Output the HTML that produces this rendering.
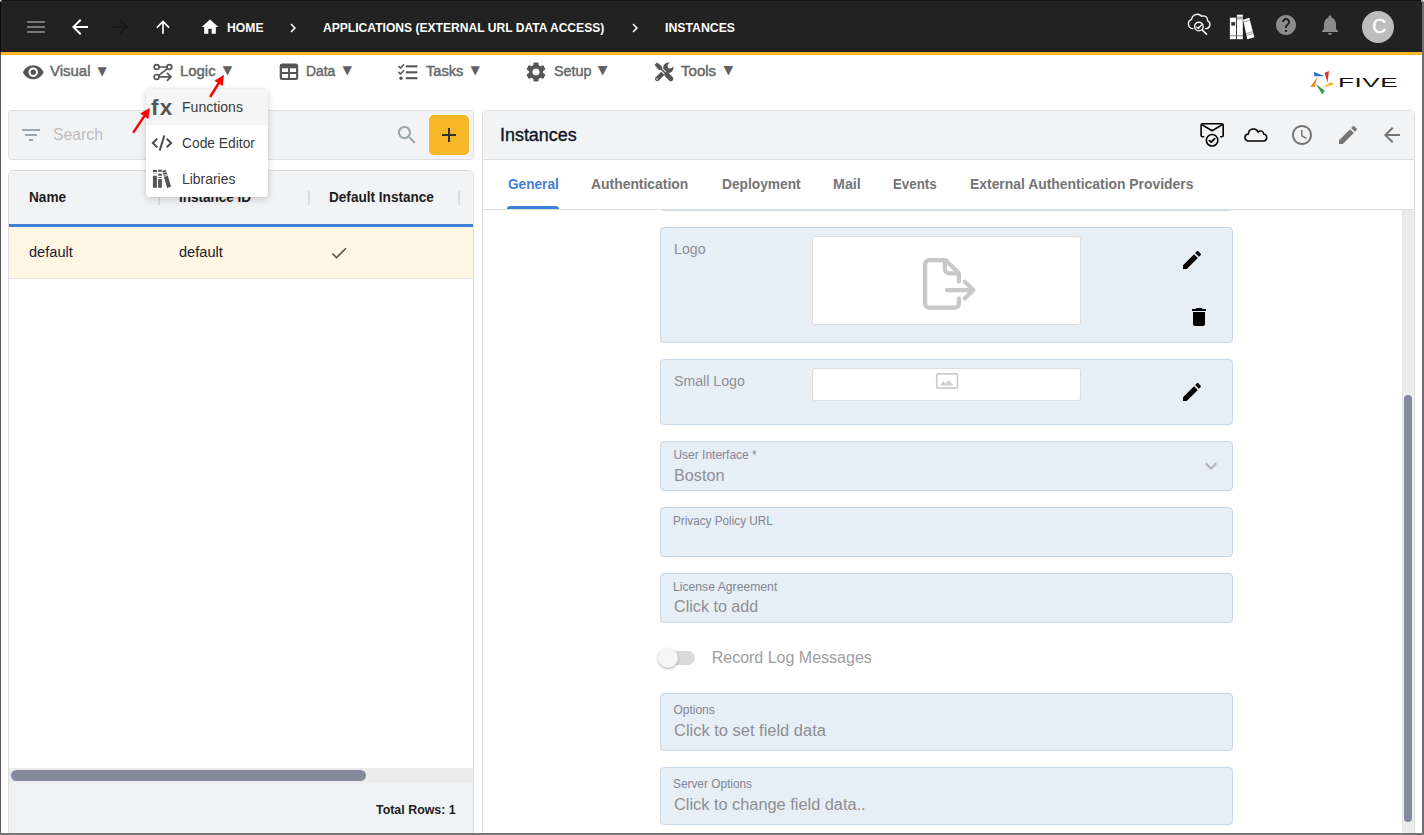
<!DOCTYPE html>
<html lang="en">
<head>
<meta charset="utf-8">
<title>Instances</title>
<style>
*{box-sizing:border-box;margin:0;padding:0}
html,body{width:1424px;height:835px;overflow:hidden;background:#fff}
body{font-family:"Liberation Sans",sans-serif;color:#222;position:relative}
.b{position:absolute}
.t{position:absolute;white-space:nowrap;line-height:1;transform-origin:0 0}
svg{position:absolute;overflow:visible}
#hdr{left:0;top:0;width:1424px;height:52px;background:#222}
#ybar{left:0;top:52px;width:1424px;height:3px;background:#f6b728}
.fld{position:absolute;left:660px;width:573px;background:#e6eef6;border:1px solid #c8d9ea;border-radius:4px}
.wb{position:absolute;left:812px;width:269px;background:#fff;border:1px solid #ddd;border-radius:3px}
.sep{position:absolute;top:191px;width:2px;height:14px;background:#dcdcdc}
</style>
</head>
<body>
<div class="b" id="hdr"></div>
<div class="b" id="ybar"></div>

<svg style="left:24px;top:15px" width="24" height="24" viewBox="0 0 24 24"><path fill="#777"  d="M3 18h18v-2H3v2zm0-5h18v-2H3v2zm0-7v2h18V6H3z"/></svg>
<svg style="left:68px;top:15px" width="24" height="24" viewBox="0 0 24 24"><path fill="#fff"  d="M20 11H7.830l5.590-5.590L12 4l-8 8 8 8 1.410-1.410L7.830 13H20v-2z"/></svg>
<svg style="left:108px;top:15px" width="24" height="24" viewBox="0 0 24 24"><path fill="#191919"  d="M12 4l-1.410 1.410L16.170 11H4v2h12.170l-5.580 5.590L12 20l8-8z"/></svg>
<svg style="left:153px;top:17.4px" width="20" height="20" viewBox="0 0 24 24"><path fill="#fff"  d="M4 12l1.410 1.410L11 7.830V20h2V7.830l5.580 5.590L20 12l-8-8-8 8z"/></svg>
<svg style="left:200px;top:17px" width="20" height="20" viewBox="0 0 24 24"><path fill="#fff"  d="M10 20v-6h4v6h5v-8h3L12 3 2 12h3v8z"/></svg>
<div class="t" style="left:226.50px;top:21.00px;font-size:13px;font-weight:700;color:#fff;transform:scaleX(0.9359);">HOME</div>
<svg style="left:284px;top:18.5px" width="18" height="18" viewBox="0 0 24 24"><path fill="#fff"  d="M10 6L8.590 7.410 13.170 12l-4.580 4.590L10 18l6-6z"/></svg>
<div class="t" style="left:323.10px;top:21.00px;font-size:13px;font-weight:700;color:#fff;transform:scaleX(0.9295);">APPLICATIONS (EXTERNAL URL DATA ACCESS)</div>
<svg style="left:626px;top:18.5px" width="18" height="18" viewBox="0 0 24 24"><path fill="#fff"  d="M10 6L8.590 7.410 13.170 12l-4.580 4.590L10 18l6-6z"/></svg>
<div class="t" style="left:665.10px;top:21.00px;font-size:13px;font-weight:700;color:#fff;transform:scaleX(0.9444);">INSTANCES</div>
<svg style="left:0;top:0" width="1" height="1"><g fill="none" stroke="#fff" stroke-width="1.35" stroke-linecap="round" stroke-linejoin="round"><path d="M1192.900 28.600A4.800 4.800 0 0 1 1191.600 19.300A5.700 5.700 0 0 1 1201.600 16.300A4.400 4.400 0 0 1 1207.700 20.900A4.100 4.100 0 0 1 1205.400 28.600"/><circle cx="1198.900" cy="26.500" r="4.300"/><path d="M1202.200 29.900L1206.500 34.200" stroke-width="1.600"/><path d="M1196.500 26.900L1198.300 28.500L1201.400 25" stroke-width="1.200"/></g><rect x="1229.900" y="17.700" width="6.100" height="21.500" fill="#fff"/><rect x="1231.300" y="22.100" width="3.800" height="3.500" fill="#333"/><rect x="1229.900" y="35.100" width="6.100" height="1.200" fill="#999"/><rect x="1236.900" y="14.700" width="5.900" height="24.500" fill="#fff"/><rect x="1236.900" y="16.500" width="5.900" height="3" fill="#aaa"/><rect x="1236.900" y="35.100" width="5.900" height="1.200" fill="#999"/><path d="M1243.100 19.700L1249.300 17.700L1254.300 37.200L1247.300 39.200z" fill="#fff"/><path d="M1243.700 22.200L1249.900 20.200M1246.300 35.400L1253.300 33.400M1245.900 33.600L1252.900 31.600" stroke="#999" stroke-width="0.900"/></svg>
<svg style="left:1274px;top:13px" width="24" height="24" viewBox="0 0 24 24"><path fill="#8c8c8c"  d="M12 2C6.480 2 2 6.480 2 12s4.480 10 10 10 10-4.480 10-10S17.520 2 12 2zm1 17h-2v-2h2v2zm2.070-7.750l-.9.920C13.450 12.900 13 13.500 13 15h-2v-.5c0-1.100.450-2.100 1.170-2.830l1.240-1.260c.370-.36.590-.86.590-1.410 0-1.100-.9-2-2-2s-2 .9-2 2H8c0-2.210 1.790-4 4-4s4 1.790 4 4c0 .880-.360 1.680-.930 2.250z"/></svg>
<svg style="left:1318px;top:13px" width="24" height="24" viewBox="0 0 24 24"><path fill="#8c8c8c"  d="M12 22c1.100 0 2-.9 2-2h-4c0 1.100.890 2 2 2zm6-6v-5c0-3.070-1.640-5.640-4.500-6.320V4c0-.830-.670-1.500-1.500-1.500s-1.500.670-1.500 1.500v.680C7.630 5.360 6 7.920 6 11v5l-2 2v1h16v-1l-2-2z"/></svg>
<div class="b" style="left:1362px;top:11px;width:32px;height:32px;border-radius:50%;background:#bdbdbd"></div>
<div class="t" style="left:1372.30px;top:17.29px;font-size:19.5px;color:#fff;-webkit-text-stroke:0.30px #fff;">C</div>
<svg style="left:21.85px;top:60.5px" width="22.5" height="22.5" viewBox="0 0 24 24"><path fill="#555"  d="M12 4.500C7 4.500 2.730 7.610 1 12c1.730 4.390 6 7.500 11 7.500s9.270-3.110 11-7.500c-1.730-4.390-6-7.500-11-7.500zM12 17c-2.760 0-5-2.240-5-5s2.240-5 5-5 5 2.240 5 5-2.240 5-5 5zm0-8c-1.660 0-3 1.340-3 3s1.340 3 3 3 3-1.340 3-3-1.340-3-3-3z"/></svg>
<div class="t" style="left:50.20px;top:63.85px;font-size:14px;color:#686868;transform:scaleX(1.0693);-webkit-text-stroke:0.45px #686868;">Visual</div>
<div class="t" style="left:97.40px;top:64.50px;font-family:'DejaVu Sans',sans-serif;font-size:12.00px;color:#616161">▼</div>
<svg style="left:0;top:0" width="1" height="1"><g fill="none" stroke="#555" stroke-width="1.700" stroke-linecap="round" stroke-linejoin="round"><circle cx="156.600" cy="67" r="2.400"/><circle cx="169.400" cy="67" r="2.400"/><circle cx="156.600" cy="76.900" r="2.400"/><path d="M159 67H167M167.500 68.600L158.700 75.400M159 76.900H170.800M167.400 73.400L171 76.900L167.400 80.300"/></g></svg>
<div class="t" style="left:180.20px;top:63.85px;font-size:14px;color:#686868;transform:scaleX(1.0627);-webkit-text-stroke:0.45px #686868;">Logic</div>
<div class="t" style="left:222.80px;top:64.45px;font-family:'DejaVu Sans',sans-serif;font-size:12.26px;color:#616161">▼</div>
<svg style="left:0;top:0" width="1" height="1"><rect x="279.700" y="63.600" width="18.500" height="16.500" rx="2.500" fill="#555"/><rect x="282" y="68.300" width="6.100" height="3.700" fill="#fff"/><rect x="290" y="68.300" width="6.100" height="3.700" fill="#fff"/><rect x="282" y="74" width="6.100" height="3.900" fill="#fff"/><rect x="290" y="74" width="6.100" height="3.900" fill="#fff"/></svg>
<div class="t" style="left:306.20px;top:63.85px;font-size:14px;color:#686868;transform:scaleX(0.9924);-webkit-text-stroke:0.45px #686868;">Data</div>
<div class="t" style="left:342.50px;top:64.45px;font-family:'DejaVu Sans',sans-serif;font-size:12.26px;color:#616161">▼</div>
<svg style="left:0;top:0" width="1" height="1"><g fill="#555"><rect x="405.800" y="65.300" width="11.600" height="2.100"/><rect x="405.800" y="71.250" width="11.600" height="2.100"/><rect x="405.800" y="77.150" width="11.600" height="2.100"/><circle cx="401" cy="78.200" r="1.700"/></g><g fill="none" stroke="#555" stroke-width="1.600" stroke-linecap="round" stroke-linejoin="round"><path d="M398.900 66.500L400.500 68.100L403.600 64.800M398.900 72.400L400.500 74L403.600 70.700"/></g></svg>
<div class="t" style="left:425.90px;top:63.85px;font-size:14px;color:#686868;transform:scaleX(1.0462);-webkit-text-stroke:0.45px #686868;">Tasks</div>
<div class="t" style="left:470.60px;top:64.47px;font-family:'DejaVu Sans',sans-serif;font-size:12.13px;color:#616161">▼</div>
<svg style="left:524px;top:60px" width="24" height="24" viewBox="0 0 24 24"><path fill="#555"  d="M19.140 12.940c.040-.3.060-.61.060-.94 0-.320-.020-.640-.070-.940l2.030-1.580c.180-.140.230-.410.120-.610l-1.920-3.320c-.120-.220-.370-.290-.590-.220l-2.390.960c-.5-.380-1.030-.7-1.620-.940l-.360-2.540c-.040-.240-.240-.410-.480-.410h-3.840c-.240 0-.430.170-.470.410l-.360 2.540c-.590.240-1.130.570-1.620.940l-2.390-.960c-.220-.080-.470 0-.590.220L2.740 8.870c-.12.210-.080.470.12.610l2.030 1.580c-.050.3-.090.630-.090.940s.020.640.070.940l-2.030 1.580c-.180.140-.230.410-.12.610l1.920 3.320c.12.220.370.290.590.220l2.390-.960c.5.380 1.030.7 1.620.940l.360 2.540c.050.240.240.410.480.410h3.840c.240 0 .440-.170.470-.410l.360-2.540c.590-.240 1.130-.560 1.620-.940l2.390.960c.220.080.470 0 .590-.220l1.920-3.320c.12-.220.070-.470-.12-.610l-2.010-1.580zM12 15.600c-1.980 0-3.600-1.620-3.600-3.600s1.620-3.600 3.600-3.600 3.600 1.620 3.600 3.600-1.620 3.600-3.600 3.600z"/></svg>
<div class="t" style="left:553.70px;top:63.85px;font-size:14px;color:#686868;transform:scaleX(1.0212);-webkit-text-stroke:0.45px #686868;">Setup</div>
<div class="t" style="left:597.80px;top:64.37px;font-family:'DejaVu Sans',sans-serif;font-size:12.65px;color:#616161">▼</div>
<svg style="left:0;top:0" width="1" height="1"><circle cx="668.300" cy="67.700" r="5.200" fill="#555"/><circle cx="670" cy="66.100" r="2.500" fill="#fff"/><path d="M670 66.100L675.200 60.900" stroke="#fff" stroke-width="5"/><path d="M665.500 70.600L657.300 78.800" stroke="#555" stroke-width="4.600" stroke-linecap="round"/><circle cx="657.100" cy="79" r="0.900" fill="#ccc"/><path d="M659.500 67.400L668 75.900" stroke="#fff" stroke-width="3.600"/><path d="M654.900 64.900L657 62.800L661.600 66.400L661.900 68.900L658.900 69.700L657.200 67.600z" fill="#555" stroke="#555" stroke-width="0.800" stroke-linejoin="round"/><path d="M661 68.900L665.600 73.500" stroke="#555" stroke-width="1.700"/><path d="M666.700 74.600L670.800 78.700" stroke="#555" stroke-width="5" stroke-linecap="round"/></svg>
<div class="t" style="left:681.10px;top:63.85px;font-size:14px;color:#686868;transform:scaleX(1.0748);-webkit-text-stroke:0.45px #686868;">Tools</div>
<div class="t" style="left:723.40px;top:64.37px;font-family:'DejaVu Sans',sans-serif;font-size:12.65px;color:#616161">▼</div>
<svg style="left:0;top:0" width="1" height="1"><path d="M1313.700 71.800L1314.300 76.200L1324.800 76.300z" fill="#2f6fd8"/><path d="M1329 71L1324.700 72.700L1327.400 82.800z" fill="#e03030"/><path d="M1330.900 82L1334 84.600L1322.400 87.800z" fill="#f6b728"/><path d="M1315.800 83.900L1324.700 90.500L1322.400 94.400z" fill="#3aa04a"/><path d="M1317.400 77.100L1310.400 86.700L1314.700 86.900z" fill="#f58220"/></svg><div class="t" style="left:1338.200px;top:76.100px;font-size:13.600px;color:#111;letter-spacing:.300px;transform-origin:0 0;transform:scaleX(1.920)">FIVE</div>
<div class="b" style="left:8px;top:110px;width:466px;height:50px;background:#f1f3f5;border:1px solid #e0e0e0;border-radius:4px"></div>
<svg style="left:19px;top:123px" width="24" height="24" viewBox="0 0 24 24"><path fill="#9aa6ae"  d="M10 18h4v-2h-4v2zM3 6v2h18V6H3zm3 7h12v-2H6v2z"/></svg>
<div class="t" style="left:53.20px;top:127.26px;font-size:16px;color:#bdbdbd;transform:scaleX(0.9852);">Search</div>
<svg style="left:395px;top:123px" width="24" height="24" viewBox="0 0 24 24"><path fill="#9aa6ae"  d="M15.500 14h-.790l-.280-.270C15.410 12.590 16 11.110 16 9.500 16 5.910 13.090 3 9.500 3S3 5.910 3 9.500 5.910 16 9.500 16c1.610 0 3.090-.590 4.230-1.570l.270.280v.790l5 4.990L20.490 19l-4.990-5zm-6 0C7.010 14 5 11.990 5 9.500S7.010 5 9.500 5 14 7.010 14 9.500 11.990 14 9.500 14z"/></svg>
<div class="b" style="left:429px;top:115px;width:40px;height:40px;background:#f6b728;border-radius:5px"></div>
<svg style="left:437px;top:123px" width="24" height="24" viewBox="0 0 24 24"><path fill="#333"  d="M19 13h-6v6h-2v-6H5v-2h6V5h2v6h6v2z"/></svg>
<div class="b" style="left:8px;top:170px;width:466px;height:664px;background:#fff;border:1px solid #dcdcdc;border-radius:5px 5px 0 0;overflow:hidden"><div class="b" style="left:0;top:0;width:466px;height:53px;background:#f1f3f5"></div><div class="b" style="left:0;top:53px;width:466px;height:3px;background:#3f7fd6"></div><div class="b" style="left:0;top:56px;width:466px;height:51px;background:#fff6e4"></div><div class="b" style="left:0;top:107px;width:466px;height:1px;background:#e2e2e2"></div><div class="b" style="left:0;top:597px;width:466px;height:15px;background:#ececec"></div><div class="b" style="left:2px;top:599px;width:355px;height:11px;border-radius:6px;background:#838a9c"></div><div class="b" style="left:0;top:612px;width:466px;height:52px;background:#eff2f4"></div></div>
<div class="sep" style="left:158px"></div><div class="sep" style="left:308px"></div><div class="sep" style="left:458px"></div>
<div class="t" style="left:28.70px;top:189.95px;font-size:14px;font-weight:700;color:#1c1c1c;transform:scaleX(0.9731);">Name</div>
<div class="t" style="left:179.00px;top:189.95px;font-size:14px;font-weight:700;color:#1c1c1c;transform:scaleX(0.9632);">Instance ID</div>
<div class="t" style="left:329.30px;top:189.95px;font-size:14px;font-weight:700;color:#1c1c1c;transform:scaleX(0.9702);">Default Instance</div>
<div class="t" style="left:28.70px;top:245.05px;font-size:14px;color:#1a1a2a;transform:scaleX(1.0429);">default</div>
<div class="t" style="left:178.70px;top:245.05px;font-size:14px;color:#1a1a2a;transform:scaleX(1.0429);">default</div>
<svg style="left:329px;top:243px" width="20" height="20" viewBox="0 0 24 24"><path fill="#555"  d="M9 16.170L4.830 12l-1.420 1.410L9 19 21 7l-1.410-1.410z"/></svg>
<div class="t" style="left:376.00px;top:802.80px;font-size:13px;font-weight:700;color:#1c1c1c;transform:scaleX(0.9545);">Total Rows: 1</div>
<div class="b" style="left:482px;top:110px;width:933px;height:740px;background:#fff;border:1px solid #dcdcdc;border-radius:5px 5px 0 0"></div>
<div class="b" style="left:483px;top:111px;width:931px;height:48px;background:#f1f3f5;border-radius:4px 4px 0 0"></div>
<div class="b" style="left:483px;top:159px;width:931px;height:1px;background:#dcdcdc"></div>
<div class="b" style="left:483px;top:209px;width:931px;height:1px;background:#dcdcdc"></div>
<div class="t" style="left:500.00px;top:125.76px;font-size:18px;color:#111827;transform:scaleX(0.9948);-webkit-text-stroke:0.40px #111827;">Instances</div>
<svg style="left:0;top:0" width="1" height="1"><g fill="none" stroke="#000" stroke-width="1.600" stroke-linecap="round" stroke-linejoin="round"><path d="M1203.600 136.700H1202.600A1.500 1.500 0 0 1 1201.100 135.200V125.300A1.500 1.500 0 0 1 1202.600 123.800H1221.700A1.500 1.500 0 0 1 1223.200 125.300V135.200A1.500 1.500 0 0 1 1221.700 136.700H1220.700"/><path d="M1201.900 124.600L1212.100 130.700L1222.400 124.600"/><circle cx="1212.100" cy="140.300" r="5.750" fill="#f1f3f5"/><path d="M1209.400 140.600L1211.200 142.200L1214.700 138.700" stroke-width="1.800"/></g></svg>
<svg style="left:0;top:0" width="1" height="1"><path d="M1247.700 141A3.600 3.600 0 0 1 1248.400 133.900A5.100 5.100 0 0 1 1258.200 132.100A3.100 3.100 0 0 1 1263.700 134.100A3.500 3.500 0 0 1 1263.900 141z" fill="none" stroke="#000" stroke-width="1.500" stroke-linejoin="round"/></svg>
<svg style="left:1290px;top:123px" width="24" height="24" viewBox="0 0 24 24"><path fill="#757575"  d="M11.990 2C6.470 2 2 6.480 2 12s4.470 10 9.990 10C17.520 22 22 17.520 22 12S17.520 2 11.990 2zM12 20c-4.420 0-8-3.580-8-8s3.580-8 8-8 8 3.580 8 8-3.580 8-8 8zm.5-13H11v6l5.250 3.150.750-1.230-4.500-2.670z"/></svg>
<svg style="left:1336px;top:123px" width="24" height="24" viewBox="0 0 24 24"><path fill="#757575"  d="M3 17.250V21h3.750L17.810 9.940l-3.750-3.750L3 17.250zM20.710 7.040c.390-.390.390-1.020 0-1.410l-2.340-2.340c-.390-.390-1.020-.390-1.410 0l-1.830 1.830 3.750 3.750 1.830-1.830z"/></svg>
<svg style="left:1380px;top:123px" width="24" height="24" viewBox="0 0 24 24"><path fill="#757575"  d="M20 11H7.830l5.590-5.590L12 4l-8 8 8 8 1.410-1.410L7.830 13H20v-2z"/></svg>
<div class="t" style="left:507.50px;top:176.95px;font-size:14px;font-weight:700;color:#3f7fd6;transform:scaleX(0.9746);">General</div>
<div class="t" style="left:591.10px;top:176.95px;font-size:14px;font-weight:700;color:#757575;transform:scaleX(0.9929);">Authentication</div>
<div class="t" style="left:721.50px;top:176.95px;font-size:14px;font-weight:700;color:#757575;transform:scaleX(0.9810);">Deployment</div><div class="t" style="left:832.70px;top:176.95px;font-size:14px;font-weight:700;color:#757575;transform:scaleX(1.0202);">Mail</div><div class="t" style="left:893.40px;top:176.95px;font-size:14px;font-weight:700;color:#757575;transform:scaleX(0.9504);">Events</div><div class="t" style="left:969.80px;top:176.95px;font-size:14px;font-weight:700;color:#757575;transform:scaleX(0.9928);">External Authentication Providers</div>
<div class="b" style="left:507px;top:206px;width:52px;height:3px;background:#3f7fd6;border-radius:3px 3px 0 0"></div>
<div class="b" style="left:1402px;top:210px;width:12px;height:640px;background:#ececec;border-left:1px solid #e3e3e3"></div>
<div class="b" style="left:1404px;top:395px;width:8px;height:427px;border-radius:4px;background:#838a9c"></div>
<div class="b" style="left:662px;top:210px;width:569px;height:1px;background:#cbdbeb"></div>
<div class="fld" style="top:227px;height:116px"></div>
<div class="wb" style="top:236px;height:89px"></div>
<div class="t" style="left:673.70px;top:242.05px;font-size:14px;color:#8e8e93;transform:scaleX(1.0120);">Logo</div>
<svg style="left:0;top:0" width="1" height="1"><g fill="none" stroke="#c8c8c8" stroke-width="4.200" stroke-linecap="round" stroke-linejoin="round"><path d="M958.900 281.500V273.300L945.800 260.200H929.100A4 4 0 0 0 925.100 264.200V303.700A4 4 0 0 0 929.100 307.700H954.900A4 4 0 0 0 958.900 303.700V298.500"/><path d="M944.900 261V269.300A4 4 0 0 0 948.900 273.300H958"/><path d="M947 290.100H973M964.800 281.700L973.300 290.100L964.800 298.500"/></g></svg>
<svg style="left:1180px;top:248px" width="24" height="24" viewBox="0 0 24 24"><path fill="#000"  d="M3 17.250V21h3.750L17.810 9.940l-3.750-3.750L3 17.250zM20.710 7.040c.390-.390.390-1.020 0-1.410l-2.340-2.340c-.390-.390-1.020-.390-1.410 0l-1.830 1.830 3.750 3.750 1.830-1.830z"/></svg>
<svg style="left:1187px;top:305px" width="24" height="24" viewBox="0 0 24 24"><path fill="#000"  d="M6 19c0 1.100.9 2 2 2h8c1.100 0 2-.9 2-2V7H6v12zM19 4h-3.500l-1-1h-5l-1 1H5v2h14V4z"/></svg>
<div class="fld" style="top:359px;height:66px"></div>
<div class="wb" style="top:368px;height:33px"></div>
<div class="t" style="left:673.70px;top:373.95px;font-size:14px;color:#8e8e93;transform:scaleX(1.0114);">Small Logo</div>
<svg style="left:0;top:0" width="1" height="1"><rect x="936.700" y="373.900" width="20.800" height="14.200" rx="1.500" fill="none" stroke="#cacaca" stroke-width="1.600"/><path d="M939.800 385.500L943.300 381L945.600 383.800L948.600 380L953.800 385.500z" fill="#cfcfcf"/></svg>
<svg style="left:1180px;top:380px" width="24" height="24" viewBox="0 0 24 24"><path fill="#000"  d="M3 17.250V21h3.750L17.810 9.940l-3.750-3.750L3 17.250zM20.710 7.040c.390-.390.390-1.020 0-1.410l-2.340-2.340c-.390-.390-1.020-.390-1.410 0l-1.830 1.830 3.750 3.750 1.830-1.830z"/></svg>
<div class="fld" style="top:441px;height:50px"></div>
<div class="t" style="left:673.40px;top:448.94px;font-size:12px;color:#828594;">User Interface *</div>
<div class="t" style="left:673.60px;top:467.76px;font-size:16px;color:#8e8e93;transform:scaleX(1.0125);">Boston</div>
<svg style="left:1199px;top:454px" width="24" height="24" viewBox="0 0 24 24"><path fill="#b0b0b0"  d="M16.590 8.590L12 13.170 7.410 8.590 6 10l6 6 6-6z"/></svg>
<div class="fld" style="top:507px;height:50px"></div>
<div class="t" style="left:673.40px;top:514.74px;font-size:12px;color:#828594;transform:scaleX(0.9784);">Privacy Policy URL</div>
<div class="fld" style="top:573px;height:50px"></div>
<div class="t" style="left:673.40px;top:581.04px;font-size:12px;color:#828594;transform:scaleX(1.0151);">License Agreement</div>
<div class="t" style="left:673.60px;top:598.76px;font-size:16px;color:#8e8e93;transform:scaleX(1.0081);">Click to add</div>
<div class="b" style="left:661px;top:651px;width:34px;height:14px;border-radius:7px;background:#dadada"></div>
<div class="b" style="left:658px;top:648px;width:20px;height:20px;border-radius:50%;background:#f6f6f6;box-shadow:0 1px 3px rgba(0,0,0,.28),0 1px 1px rgba(0,0,0,.08)"></div>
<div class="t" style="left:711.70px;top:650.26px;font-size:16px;color:#9e9e9e;">Record Log Messages</div>
<div class="fld" style="top:693px;height:58px"></div>
<div class="t" style="left:673.40px;top:703.64px;font-size:12px;color:#828594;">Options</div>
<div class="t" style="left:673.50px;top:722.66px;font-size:16px;color:#8e8e93;transform:scaleX(1.0288);">Click to set field data</div>
<div class="fld" style="top:767px;height:58px"></div>
<div class="t" style="left:673.40px;top:777.74px;font-size:12px;color:#828594;transform:scaleX(0.9875);">Server Options</div>
<div class="t" style="left:673.50px;top:796.86px;font-size:16px;color:#8e8e93;transform:scaleX(1.0212);">Click to change field data..</div>
<div class="b" style="left:146px;top:89px;width:122px;height:108px;background:#fff;border-radius:4px;box-shadow:0 3px 8px rgba(0,0,0,.13),0 0 4px rgba(0,0,0,.09)"></div>
<div class="b" style="left:146px;top:89px;width:122px;height:36px;background:#f5f5f5;border-radius:4px 4px 0 0"></div>
<div class="t" style="left:182.10px;top:100.15px;font-size:14px;color:#3a3a3a;transform:scaleX(1.0041);">Functions</div>
<div class="t" style="left:182.10px;top:136.15px;font-size:14px;color:#3a3a3a;transform:scaleX(0.9865);">Code Editor</div>
<div class="t" style="left:182.10px;top:172.15px;font-size:14px;color:#3a3a3a;transform:scaleX(0.9953);">Libraries</div>
<div class="t" style="left:151px;top:96.500px;font-size:22.500px;font-weight:700;letter-spacing:1.200px;color:#555">fx</div><svg style="left:0;top:0" width="1" height="1"><g fill="none" stroke="#4a4a4a" stroke-width="2" stroke-linecap="butt" stroke-linejoin="miter"><path d="M157.200 138.600L152.800 143L157.200 147.400M166.700 138.600L171.100 143L166.700 147.400M164.300 135.500L159.700 150.600"/></g><g fill="#555"><rect x="152.900" y="169.900" width="4" height="2.100"/><rect x="152.900" y="175.700" width="4" height="12.100"/><rect x="152.900" y="172.700" width="4" height="1" fill="#aaa"/><rect x="158.100" y="169.700" width="3.800" height="2"/><rect x="158.100" y="173.700" width="3.800" height="2"/><rect x="158.100" y="177.100" width="3.800" height="0.800"/><rect x="158.100" y="179.100" width="3.800" height="8.700"/><path d="M162.200 170.700L165.900 169.700L171.100 186.500L167.100 188z"/></g><path d="M162.500 173.100L167 171.700M163.200 175.400L167.700 174M163.600 176.600L168.100 175.200" stroke="#fff" stroke-width="0.700"/></svg>
<svg style="left:0;top:0" width="1" height="1"><path d="M210.1 97.0L219.1 82.4" stroke="#f00" stroke-width="2.5"/><path d="M223.9 74.8 L222.8 85.9 L214.5 80.7 z" fill="#f00"/><path d="M133.2 132.6L144.8 115.4" stroke="#f00" stroke-width="2.5"/><path d="M149.9 108.0 L148.3 119.0 L140.2 113.5 z" fill="#f00"/></svg>
<div class="b" style="left:0;top:0;width:1px;height:835px;background:rgba(0,0,0,.64)"></div>
<div class="b" style="left:0;top:0;width:1424px;height:1px;background:#141414"></div>
<div class="b" style="left:1422px;top:0;width:2px;height:835px;background:#6e6e6e"></div>
<div class="b" style="left:0;top:833px;width:1424px;height:2px;background:#757575"></div>
<div class="b" style="left:0;top:0;width:2px;height:2px;background:#666"></div><div class="b" style="left:0;top:0;width:1px;height:1px;background:#e8e8e8"></div>
<div class="b" style="left:1421px;top:0;width:3px;height:2px;background:#999"></div><div class="b" style="left:1423px;top:0;width:1px;height:1px;background:#fff"></div>
</body>
</html>
